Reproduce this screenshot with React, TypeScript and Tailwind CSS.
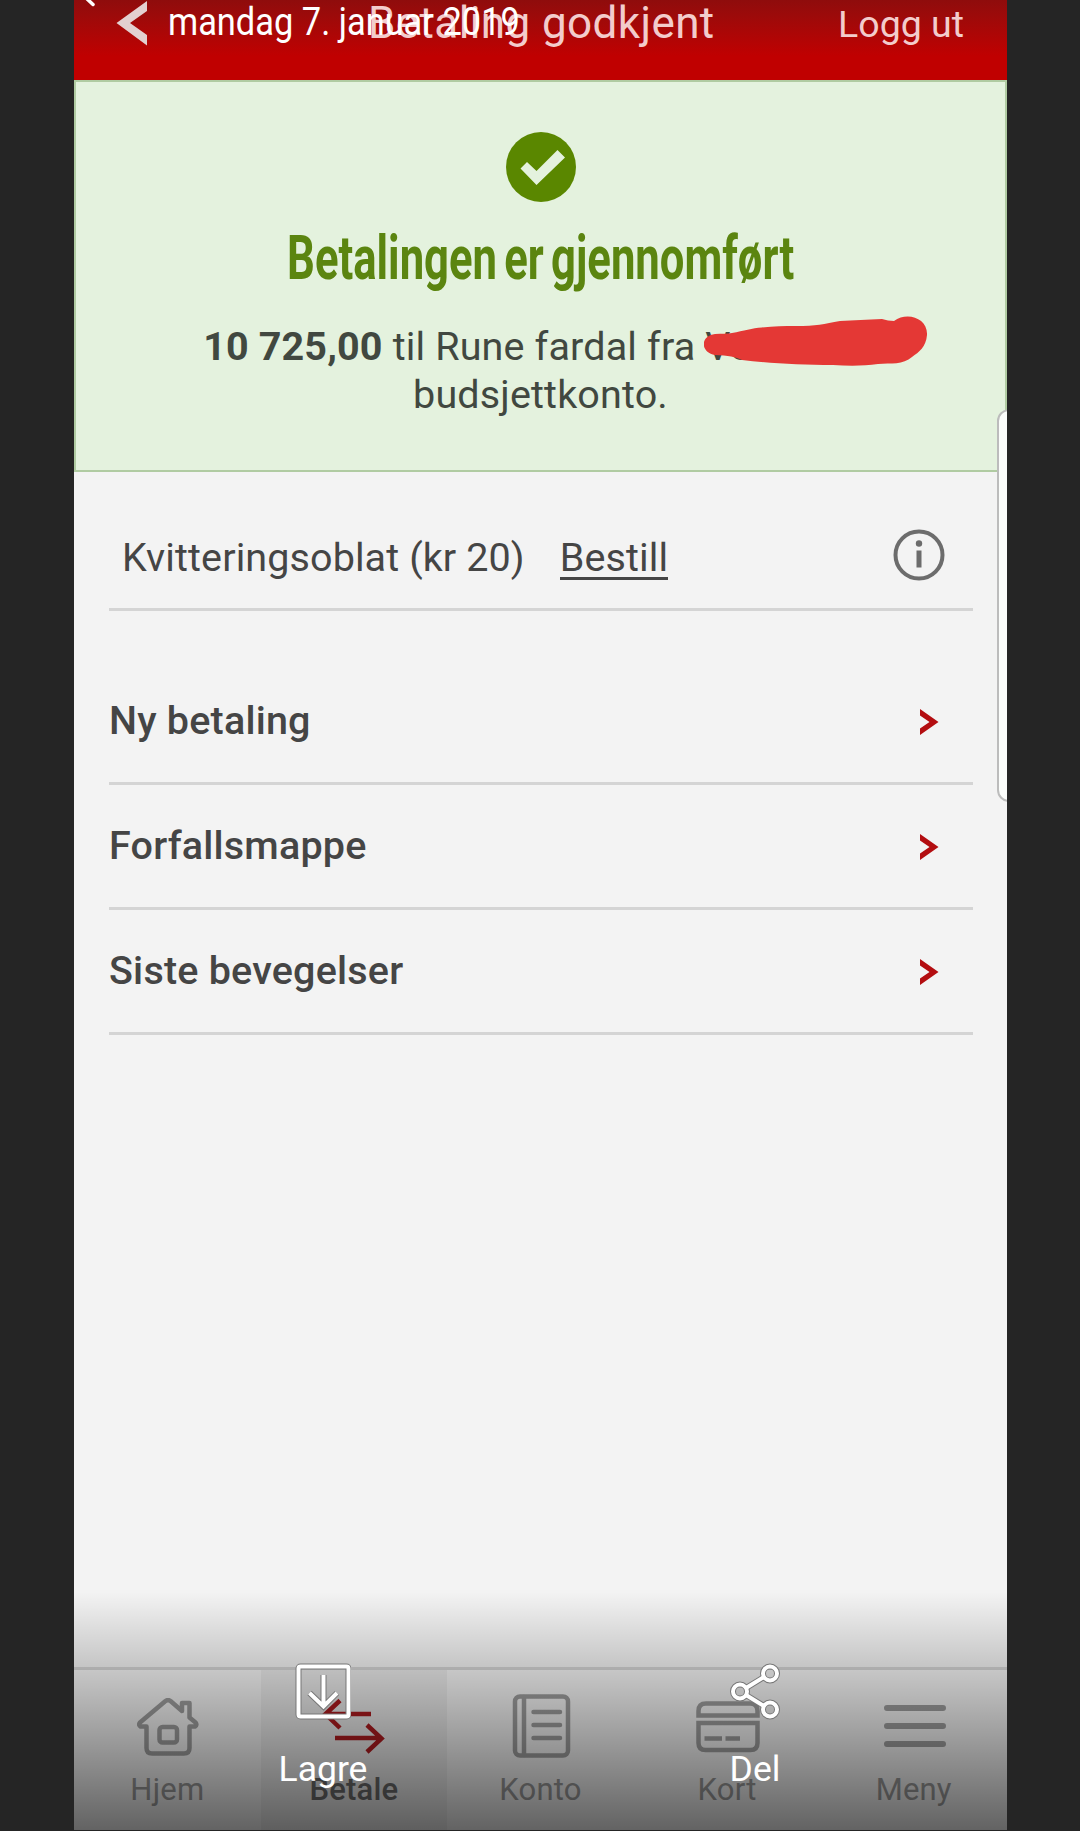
import React from 'react';

const menuItems = ['Ny betaling', 'Forfallsmappe', 'Siste bevegelser'];

const HomeIcon = () => (
    <svg width="64" height="60" viewBox="0 0 64 60" fill="none" stroke="currentColor" strokeWidth="4.500" strokeLinejoin="round" strokeLinecap="round">
        <path d="M9.500 28.500 V50 q0 5.500 5.500 5.500 H47 q5.500 0 5.500-5.500 V28.500 H58 q2.500-1.500 0.500-4 L52.500 19.500 V5 H45 V13 L33.500 3 q-2.500-1.800-5 0 L3 24.500 q-2 2.500 0.500 4 Z" />
        <rect x="22.500" y="29" width="17.500" height="15.500" rx="3" />
    </svg>
);

const TransferIcon = () => (
    <svg className="-mt-0.5 -ml-1" width="64" height="60" viewBox="0 0 64 60" fill="none" stroke="#b01c20" strokeWidth="4.500">
        <path d="M50 17 H4 M19 3.500 L4.500 17 L19 31" />
        <path d="M14 41 H60 M46 28 L60.500 41.500 L46 55" />
    </svg>
);

const LedgerIcon = () => (
    <svg className="-mt-1" width="60" height="64" viewBox="0 0 60 64" fill="none" stroke="currentColor" strokeWidth="4.500" strokeLinecap="round">
        <rect x="3" y="2.500" width="53" height="59" rx="5" />
        <path d="M12 3 V61" />
        <path d="M21.500 18 H48 M21.500 31 H48 M21.500 44 H48" />
    </svg>
);

const CardIcon = () => (
    <svg className="-mt-0.5" width="66" height="52" viewBox="0 0 66 52" fill="none" stroke="currentColor" strokeWidth="4.500">
        <path d="M2.500 14.500 V10 q0-7.500 7.500-7.500 H54 q7.500 0 7.500 7.500 V14.500 Z" />
        <path d="M2.500 22 H61.500 V42 q0 7-7 7 H9.500 q-7 0-7-7 Z" />
        <path d="M8.500 37.500 H26 M29.500 37.500 H44" />
    </svg>
);

const MenuIcon = () => (
    <svg className="-mt-1" width="64" height="44" viewBox="0 0 64 44" fill="none" stroke="currentColor" strokeWidth="6" strokeLinecap="round">
        <path d="M4 4 H60 M4 22 H60 M4 40 H60" />
    </svg>
);

const tabs = [
    { label: 'Hjem', icon: <HomeIcon />, active: false },
    { label: 'Betale', icon: <TransferIcon />, active: true },
    { label: 'Konto', icon: <LedgerIcon />, active: false },
    { label: 'Kort', icon: <CardIcon />, active: false },
    { label: 'Meny', icon: <MenuIcon />, active: false },
];

const Header = () => (
    <header className="relative h-20 shrink-0 bg-linear-to-b from-[#8f0c0c] to-[#c00000] to-70% text-[#f3cccc]">
        <div className="flex h-10 items-start">
            <svg className="ml-[42px] shrink-0" width="34" height="46" viewBox="0 0 34 46" fill="#e3d0d0">
                <path d="M31 1 V11 L14 23 L31 35 V45.500 L0.500 23 Z" />
            </svg>
            <h1 className="ml-[218px] whitespace-nowrap text-[44px] leading-[46px] tracking-[0.4px]">Betaling godkjent</h1>
            <button className="ml-auto mr-[43px] mt-0.5 whitespace-nowrap text-[37.5px] leading-[44px]">Logg ut</button>
        </div>
        {/* gallery date on top of the app header */}
        <svg className="absolute left-2 top-0" width="16" height="8" viewBox="0 0 16 8">
            <path d="M2 -4 L11 4.500" stroke="#fff" strokeWidth="3.500" strokeLinecap="round" />
        </svg>
        <span className="absolute left-[94px] top-0 origin-left scale-x-[.905] whitespace-nowrap text-[38px] leading-[44px] text-white">
            mandag 7. januar 2019
        </span>
    </header>
);

const Confirmation = () => (
    <section className="relative flex h-[392px] shrink-0 flex-col items-center border-2 border-[#b0cba2] bg-[#e4f2de] text-center">
        <svg className="mt-[50px] shrink-0" width="70" height="70" viewBox="0 0 70 70">
            <circle cx="35" cy="35" r="35" fill="#5a8700" />
            <path d="M14.500 36.500 L21 30 L30.500 39 L51.500 18 L59 25.500 L30.500 53 Z" fill="#e4f2de" />
        </svg>
        <h2 className="mt-4 origin-center scale-x-[.715] whitespace-nowrap text-[61px] font-bold leading-[80px] text-[#5b8510] [word-spacing:-5px]">
            Betalingen er gjennomført
        </h2>
        <p className="mt-[25px] whitespace-nowrap text-[39.5px] leading-[48px] tracking-[0.15px] text-[#414840]">
            <strong className="font-bold">10 725,00</strong> til Rune fardal fra Ve<span className="inline-block w-[127px]" />
            <br />
            budsjettkonto.
        </p>
        <svg className="absolute left-[628px] top-[234px]" width="228" height="54" viewBox="0 0 228 54">
            <path
                d="M11 18 C18 17.500 24 18 28 17 C40 15 48 12 58 11.500 C70 10 80 10 92 10 C112 10 120 8 136 5 C150 4 163 4 178 3 C182 4 186 5 190 5 C203 -5 224 2 223 19 C222 31 215 36 208 41 C199 49 187 47 174 48 C160 50 145 50 129 49 C96 49 64 47 38 44 C32 41 24 39.500 11 39 C-4 36 -4 20 11 18 Z"
                fill="#e43835"
            />
        </svg>
    </section>
);

const App = () => {
    return (
        <div className="flex h-[1831px] w-[1080px] bg-[#252525] font-[Roboto,sans-serif]">
            <main className="relative ml-[74px] flex h-[1830px] w-[933px] flex-col overflow-hidden bg-[#f3f3f3] text-[#454545]">
                <Header />
                <Confirmation />

                <div className="ml-[35px] mr-[34px] flex h-[139px] shrink-0 items-center border-b-3 border-[#d4d4d4] pl-[13px] pr-[28px] pt-[36px] text-[39.5px] tracking-[0.1px]">
                    <span className="whitespace-nowrap">Kvitteringsoblat (kr 20)</span>
                    <a className="ml-[35px] mt-0.5 whitespace-nowrap border-b-3 border-[#454545] leading-[38px]">Bestill</a>
                    <svg className="-mt-1.5 ml-auto shrink-0" width="52" height="52" viewBox="0 0 52 52">
                        <circle cx="26" cy="26" r="23.500" fill="none" stroke="#6c6c6c" strokeWidth="4" />
                        <circle cx="26" cy="14.500" r="3.200" fill="#6c6c6c" />
                        <rect x="23.500" y="21.500" width="5" height="17" fill="#6c6c6c" />
                    </svg>
                </div>

                <nav className="ml-[35px] mr-[34px] mt-[49px]">
                    {menuItems.map((item) => (
                        <a key={item} className="flex h-[125px] items-center justify-between border-b-3 border-[#d4d4d4] pr-[34px] text-[39.5px] font-medium tracking-[0.2px]">
                            {item}
                            <svg className="mt-0.5" width="20" height="28" viewBox="0 0 20 28" fill="#b30d10">
                                <path d="M1 1 L19.500 14 L1 27 V20.500 L10.500 14 L1 7.500 Z" />
                            </svg>
                        </a>
                    ))}
                </nav>

                <footer className="mt-auto flex h-[163px] shrink-0 border-t-3 border-[#d6d6d6] bg-[#f7f7f7]">
                    {tabs.map((tab) => (
                        <div key={tab.label} className={`flex flex-1 flex-col items-center text-[#a0a0a0] ${tab.active ? 'bg-[#ececec]' : ''}`}>
                            <div className="mt-[25px] flex h-[66px] items-center justify-center pl-[3px]">{tab.icon}</div>
                            <span className={`mt-[9px] text-[31px] leading-[40px] tracking-[0.2px] ${tab.active ? 'font-medium text-[#6c6c6c]' : 'text-[#9c9c9c]'}`}>{tab.label}</span>
                        </div>
                    ))}
                </footer>

                {/* edge panel handle */}
                <div className="absolute -right-2 top-[409px] h-[393px] w-[18px] rounded-l-xl border-2 border-[#bcbcbc] bg-[#fbfdfb]" />

                {/* gallery shade with the save and share actions */}
                <div className="absolute inset-x-0 bottom-0 h-[238px] bg-linear-to-b from-black/0 to-black/60" />
                <button className="absolute left-[204px] top-[1662px] flex w-[90px] flex-col items-center text-[35.5px] leading-[44px] text-white">
                    <svg width="56" height="58" viewBox="0 0 56 58" fill="none">
                        <g stroke="#777" strokeWidth="6">
                            <rect x="3.500" y="4.500" width="50" height="50" rx="2" />
                            <path d="M28.500 13 V44 M14.500 31 L28.500 44.500 L42 31" />
                        </g>
                        <g stroke="#fff" strokeWidth="4">
                            <rect x="3.500" y="4.500" width="50" height="50" rx="2" />
                            <path d="M28.500 13 V44 M14.500 31 L28.500 44.500 L42 31" />
                        </g>
                    </svg>
                    <span className="mt-[27px]">Lagre</span>
                </button>
                <button className="absolute left-[636px] top-[1662px] flex w-[90px] flex-col items-center text-[35.5px] leading-[44px] text-white">
                    <svg width="52" height="58" viewBox="0 0 52 58" fill="none">
                        <g stroke="#777" strokeWidth="6">
                            <path d="M17 26 L35 15 M17 33 L35 44" />
                            <circle cx="11" cy="29.500" r="7" />
                            <circle cx="41" cy="11.500" r="7" />
                            <circle cx="41" cy="47.500" r="7" />
                        </g>
                        <g stroke="#fff" strokeWidth="4">
                            <path d="M17 26 L35 15 M17 33 L35 44" />
                            <circle cx="11" cy="29.500" r="7" />
                            <circle cx="41" cy="11.500" r="7" />
                            <circle cx="41" cy="47.500" r="7" />
                        </g>
                    </svg>
                    <span className="mt-[27px]">Del</span>
                </button>
            </main>
        </div>
    );
};

export default App;
